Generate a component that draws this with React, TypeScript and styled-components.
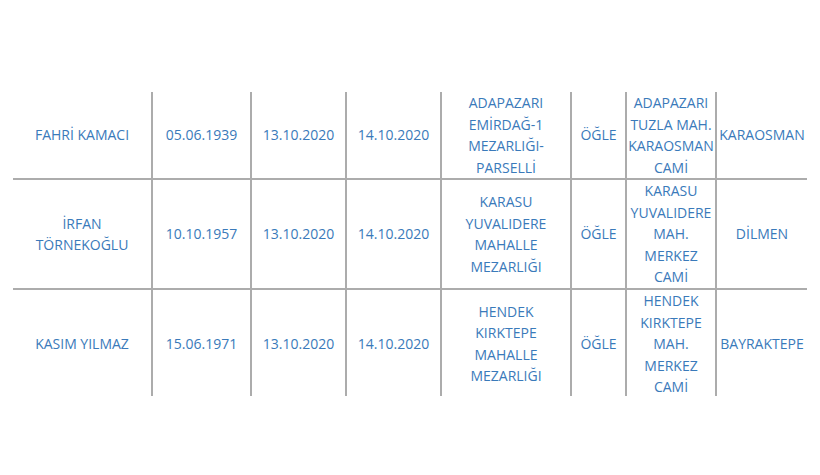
import * as React from 'react'
import styled, { createGlobalStyle } from 'styled-components'

const GlobalStyle = createGlobalStyle`
  html, body {
    margin: 0;
    padding: 0;
    background: #fff;
  }
  body {
    font-family: "Open Sans", "Liberation Sans", sans-serif;
  }
`

const Page = styled.div`
  width: 820px;
  height: 475px;
  padding-top: 92px;
  padding-left: 13px;
  box-sizing: border-box;
`

// alt kısım ekran dışında kalıyor gibi kesiliyor
const Clip = styled.div`
  width: 794px;
  height: 304px;
  overflow: hidden;
`

const Table = styled.table`
  border-collapse: collapse;
  table-layout: fixed;
  width: 794px;
  tr + tr > td {
    border-top: 2px solid #acacac;
  }
`

const Row = styled.tr<{ $height: number }>`
  height: ${p => p.$height}px;
`

const Cell = styled.td`
  padding: 0;
  text-align: center;
  vertical-align: middle;
  color: #3a7aba;
  font-size: 14px;
  line-height: 21.5px;
  & + & {
    border-left: 2px solid #acacac;
  }
`

const widths = [139, 99, 95, 95, 130, 55, 90, 91]

const rows = [
  {
    height: 86,
    cells: [
      'FAHRİ KAMACI',
      '05.06.1939',
      '13.10.2020',
      '14.10.2020',
      'ADAPAZARI\nEMİRDAĞ-1\nMEZARLIĞI-\nPARSELLİ',
      'ÖĞLE',
      'ADAPAZARI\nTUZLA MAH.\nKARAOSMAN\nCAMİ',
      'KARAOSMAN',
    ],
  },
  {
    height: 110,
    cells: [
      'İRFAN\nTÖRNEKOĞLU',
      '10.10.1957',
      '13.10.2020',
      '14.10.2020',
      'KARASU\nYUVALIDERE\nMAHALLE\nMEZARLIĞI',
      'ÖĞLE',
      'KARASU\nYUVALIDERE\nMAH.\nMERKEZ\nCAMİ',
      'DİLMEN',
    ],
  },
  {
    height: 108,
    cells: [
      'KASIM YILMAZ',
      '15.06.1971',
      '13.10.2020',
      '14.10.2020',
      'HENDEK\nKIRKTEPE\nMAHALLE\nMEZARLIĞI',
      'ÖĞLE',
      'HENDEK\nKIRKTEPE\nMAH.\nMERKEZ\nCAMİ',
      'BAYRAKTEPE',
    ],
  },
]

const App: React.FunctionComponent = () => (
  <>
    <GlobalStyle />
    <Page>
      <Clip>
        <Table>
          <colgroup>
            {widths.map((w, i) => <col key={i} style={{ width: w }} />)}
          </colgroup>
          <tbody>
            {rows.map((row, r) => (
              <Row key={r} $height={row.height}>
                {row.cells.map((text, c) => (
                  <Cell key={c}>
                    {text.split('\n').map((line, l) => (
                      <React.Fragment key={l}>
                        {l > 0 && <br />}
                        {line}
                      </React.Fragment>
                    ))}
                  </Cell>
                ))}
              </Row>
            ))}
          </tbody>
        </Table>
      </Clip>
    </Page>
  </>
)

export default App
